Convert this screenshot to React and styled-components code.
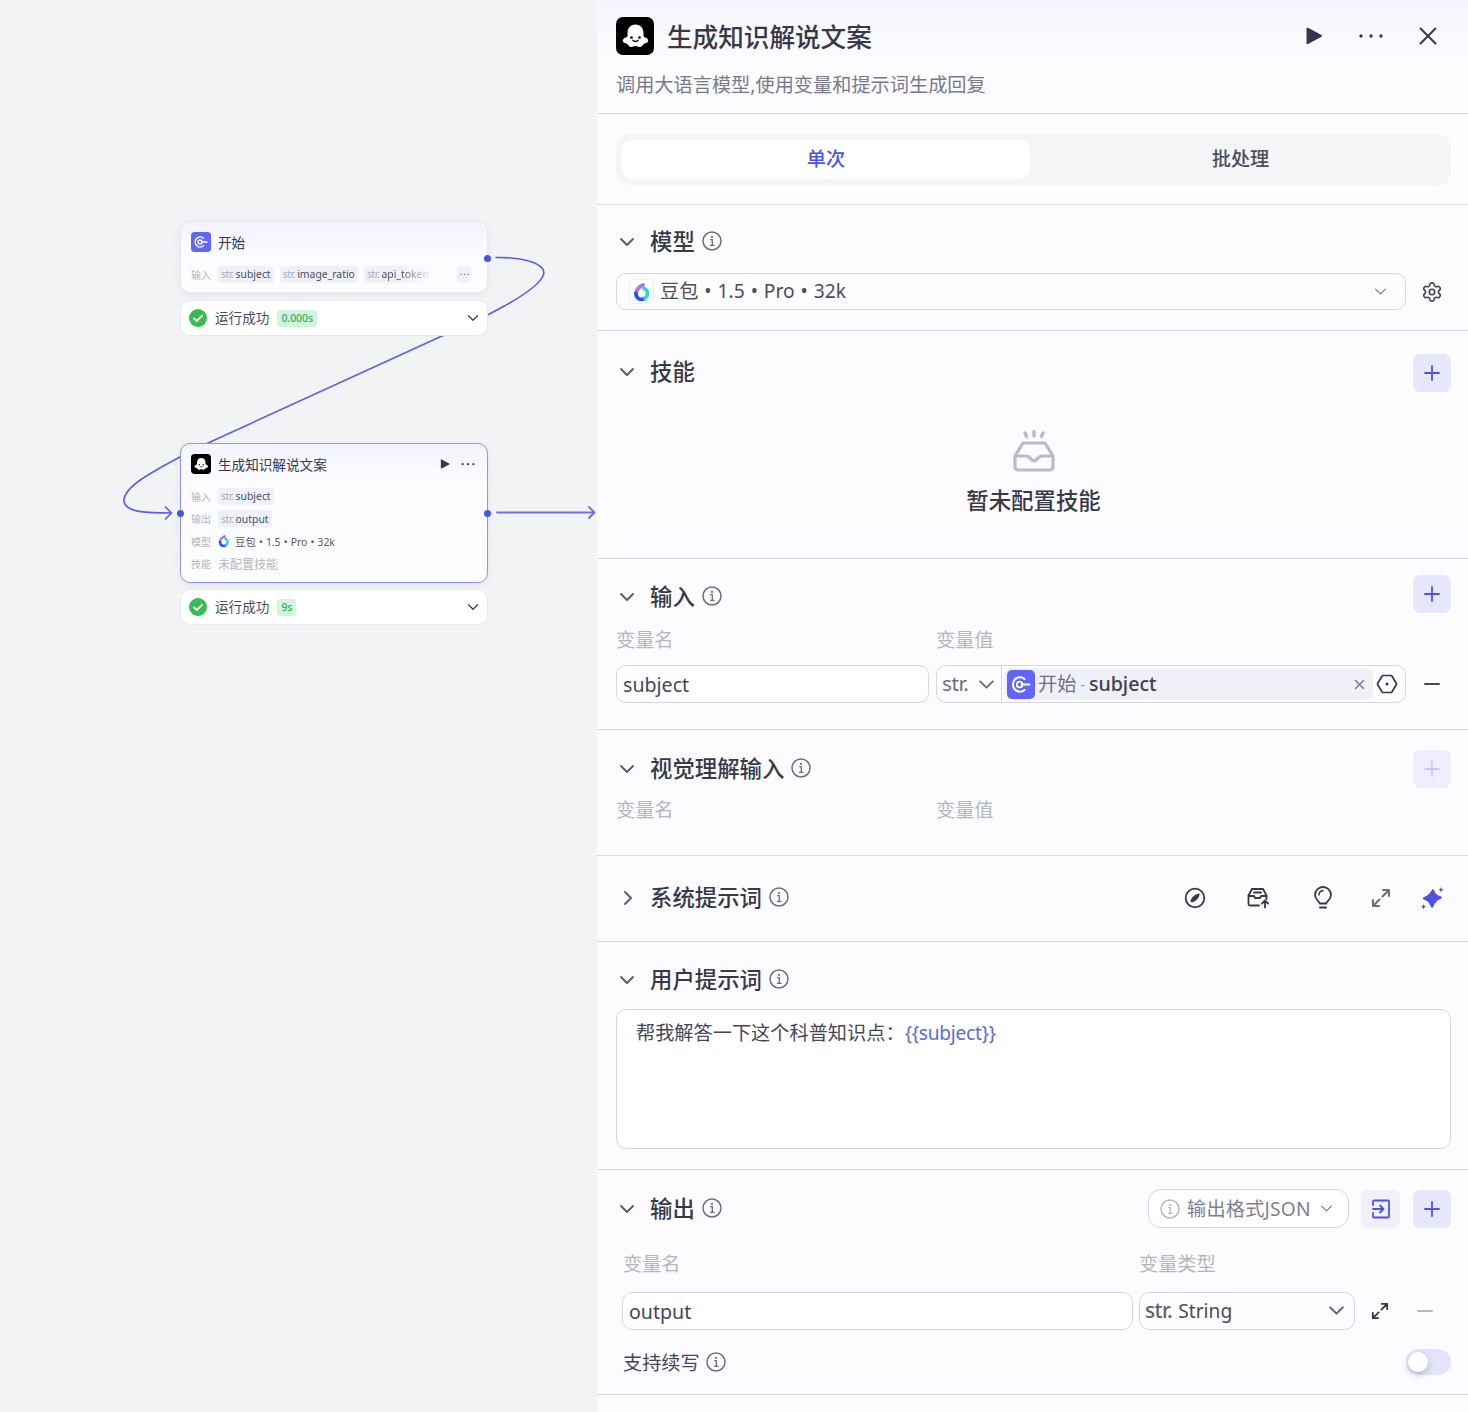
import React from 'react';
import styled, { createGlobalStyle } from 'styled-components';
import { Settings } from 'lucide-react';

const FONT = '"Noto Sans", "Noto Sans CJK SC", sans-serif';
const INK = '#373949';
const BLUE = '#4d53e8';

const Global = createGlobalStyle`
  html, body { margin: 0; padding: 0; }
  body { font-family: ${FONT}; color: ${INK}; background: #f2f3f5; }
  * { box-sizing: border-box; }
`;

const Page = styled.div`
  display: flex;
  width: 1468px;
  height: 1412px;
  overflow: hidden;
`;

/* ---------- canvas ---------- */
const Canvas = styled.div`
  position: relative;
  width: 597px;
  flex: none;
  background-color: #f2f3f5;
  background-image: radial-gradient(#e7e8ec 1px, transparent 1.2px);
  background-size: 32px 32px;
`;
const Edges = styled.svg`
  position: absolute;
  inset: 0;
`;
const NodeWrap = styled.div`
  position: absolute;
  left: 180px;
  top: ${p => p.$top}px;
  width: 308px;
  display: flex;
  flex-direction: column;
  gap: ${p => p.$gap}px;
`;
const NodeCard = styled.div`
  position: relative;
  height: ${p => p.$h}px;
  border-radius: 10px;
  border: 1px solid ${p => (p.$selected ? '#8f93f5' : '#e8e8f2')};
  background: linear-gradient(180deg, #f3f3ff 0, #fcfcff 40px, #fdfdff 100%);
  box-shadow: 0 2px 6px rgba(40, 45, 80, 0.08);
  padding: 10px 9px 0 10px;
`;
const NodeHead = styled.div`
  display: flex;
  align-items: center;
  gap: 7px;
  height: 20px;
  font-size: 13.6px;
  color: ${INK};
`;
const NodeTitle = styled.span`
  flex: 1;
  white-space: nowrap;
`;
const NodeActions = styled.div`
  display: flex;
  align-items: center;
  gap: 11px;
  padding-right: 3px;
`;
const NodeRows = styled.div`
  display: flex;
  flex-direction: column;
  margin-top: ${p => p.$mt}px;
  gap: 4.67px;
`;
const NodeRow = styled.div`
  display: flex;
  align-items: center;
  gap: 7px;
  height: 18px;
  font-size: 10.4px;
  white-space: nowrap;
`;
const NodeLabel = styled.span`
  width: 20px;
  flex: none;
  color: #b3b5c0;
  font-size: 10px;
`;
const Tag = styled.span`
  display: inline-flex;
  align-items: center;
  height: 17px;
  padding: 0 3px;
  border-radius: 3px;
  background: #f0f1f8;
  color: #4b4d5e;
  font-size: 10.4px;
  margin-right: ${p => p.$mr || 0}px;
  ${p => p.$fade && `
    -webkit-mask-image: linear-gradient(90deg, #000 55%, transparent 100%);
    mask-image: linear-gradient(90deg, #000 55%, transparent 100%);
  `}
`;
const TagType = styled.span`
  color: #a9acbb;
  margin-right: 2px;
  letter-spacing: -0.4px;
`;
const MoreChip = styled.span`
  position: absolute;
  left: 276px;
  top: 44px;
  width: 14px;
  height: 17px;
  border-radius: 3px;
  background: #f0f1f8;
  display: flex;
  align-items: center;
  justify-content: center;
`;
const NodeValue = styled.span`
  display: flex;
  align-items: center;
  gap: 5px;
  color: #555766;
  font-size: 10.4px;
  word-spacing: 0.4px;
`;
const NodeMuted = styled.span`
  color: #b3b5c0;
  font-size: 12px;
`;
const Handle = styled.span`
  position: absolute;
  width: 7px;
  height: 7px;
  border-radius: 50%;
  background: ${BLUE};
  top: ${p => p.$top}px;
  ${p => (p.$left ? 'left: -4px;' : 'right: -4px;')}
`;
const StatusBar = styled.div`
  display: flex;
  align-items: center;
  height: 36px;
  padding: 0 8px 0 8px;
  background: #fff;
  border: 1px solid #e8e8f0;
  border-radius: 10px;
  font-size: 13.6px;
  color: #4a4c5b;
`;
const StatusText = styled.span`
  margin-left: 8px;
  padding-bottom: 3px;
`;
const StatusTag = styled.span`
  margin-left: 8px;
  height: 17px;
  padding: 0 4px;
  border-radius: 3px;
  background: #d2f3de;
  color: #22b655;
  font-size: 10.4px;
  font-weight: 500;
  display: flex;
  align-items: center;
`;
const Spacer = styled.span`
  flex: 1;
`;

/* ---------- panel ---------- */
const Panel = styled.div`
  flex: 1;
  min-width: 0;
  background: #fcfcff;
  display: flex;
  flex-direction: column;
`;
const Section = styled.section`
  height: ${p => p.$h}px;
  flex: none;
  padding: ${p => p.$pt}px 17px 0 19px;
  border-bottom: 1px solid #d9d9e6;
`;
const Header = styled(Section)`
  background: linear-gradient(180deg, #f4f4fe 0, #fcfcff 60px);
`;
const HeaderTop = styled.div`
  display: flex;
  align-items: center;
  height: 38px;
`;
const Title = styled.h1`
  margin: 4px 0 0 13px;
  font-size: 25.6px;
  font-weight: 500;
  color: ${INK};
  flex: 1;
  line-height: 38px;
  white-space: nowrap;
`;
const HeaderActions = styled.div`
  display: flex;
  align-items: center;
  gap: 35px;
  padding-right: 14px;
`;
const Subtitle = styled.p`
  margin: 17px 0 0;
  font-size: 19.2px;
  line-height: 26px;
  color: #787a8b;
  white-space: nowrap;
`;
const Tabs = styled.div`
  display: flex;
  height: 51px;
  padding: 6px 0 6px 6px;
  border-radius: 13px;
  background: #f5f5f7;
`;
const TabItem = styled.div`
  flex: ${p => (p.$active ? '0 0 408px' : '1')};
  display: flex;
  align-items: center;
  justify-content: center;
  border-radius: 10px;
  padding-bottom: 3px;
  font-size: 19.2px;
  font-weight: 500;
  background: ${p => (p.$active ? '#fff' : 'transparent')};
  color: ${p => (p.$active ? BLUE : '#4c4e5d')};
`;
const SectionHead = styled.div`
  display: flex;
  align-items: center;
  height: ${p => p.$h || 38}px;
`;
const Chevron = styled.span`
  width: 22px;
  display: flex;
  justify-content: center;
  margin-right: 12px;
  flex: none;
`;
const SectionTitle = styled.h2`
  margin: 0 7px 0 0;
  font-size: 22.4px;
  line-height: 30px;
  font-weight: 500;
  color: ${INK};
  white-space: nowrap;
`;
const HeadIcon = styled.span`
  display: flex;
  padding-bottom: 2px;
`;
const PlusButton = styled.button`
  width: ${p => p.$w || 38}px;
  height: 38px;
  border: 0;
  padding: 0;
  border-radius: 7px;
  background: ${p => (p.$soft ? '#f0f1f8' : '#e6e7fd')};
  display: flex;
  align-items: center;
  justify-content: center;
  opacity: ${p => (p.$disabled ? 0.62 : 1)};
  flex: none;
`;
const Select = styled.div`
  display: flex;
  align-items: center;
  flex: 1;
  height: 37px;
  padding: 0 18px 0 12px;
  border: 1px solid #d5d5e5;
  border-radius: 10px;
  font-size: 19.2px;
  color: #4a4c5b;
  background: #fdfdff;
`;
const ModelName = styled.span`
  padding-bottom: 3px;
  word-spacing: 1px;
  white-space: nowrap;
`;
const ModelTile = styled.span`
  width: 25px;
  height: 25px;
  display: flex;
  align-items: center;
  justify-content: center;
  background: #fff;
  border: 1px solid #eceef4;
  border-radius: 5px;
  margin-right: 6px;
  flex: none;
`;
const Row = styled.div`
  display: flex;
  align-items: center;
  margin-top: ${p => p.$mt || 0}px;
  padding-left: ${p => p.$pl || 0}px;
`;
const Gear = styled.span`
  width: 45px;
  display: flex;
  justify-content: flex-end;
  padding-right: 8px;
  flex: none;
  color: #454757;
`;
const Empty = styled.div`
  display: flex;
  flex-direction: column;
  align-items: center;
  margin-top: 39px;
`;
const EmptyText = styled.div`
  margin-top: 12px;
  font-size: 22.4px;
  line-height: 34px;
  font-weight: 500;
  color: ${INK};
`;
const Labels = styled.div`
  display: grid;
  grid-template-columns: ${p => p.$cols};
  margin-top: ${p => p.$mt}px;
  padding-left: ${p => p.$pl || 0}px;
  font-size: 19.2px;
  line-height: 26px;
  color: #b4b5bd;
`;
const Field = styled.div`
  width: ${p => p.$w}px;
  height: 38px;
  flex: none;
  display: flex;
  align-items: center;
  padding: 0 6px 0 6px;
  border: 1px solid #d5d5e5;
  border-radius: 10px;
  background: #fff;
  font-size: 19.6px;
  color: #454757;
`;
const ValueBox = styled.div`
  width: 470px;
  height: 38px;
  flex: none;
  margin-left: 7px;
  display: flex;
  align-items: center;
  border: 1px solid #d5d5e5;
  border-radius: 10px;
  background: #fdfdff;
`;
const TypePick = styled.div`
  width: 65px;
  height: 100%;
  flex: none;
  display: flex;
  align-items: center;
  gap: 10px;
  padding: 0 0 0 5px;
  border-right: 1px solid #d5d5e5;
  font-size: 20.8px;
  letter-spacing: -0.5px;
  color: #6d6f7d;
`;
const TypeLabel = styled.span`
  padding-bottom: 3px;
`;
const RefChip = styled.div`
  width: 369px;
  height: 32px;
  margin: 0 3px 0 2px;
  flex: none;
  display: flex;
  align-items: center;
  padding: 0 8px 0 3px;
  border-radius: 8px;
  background: #eff0f8;
`;
const RefNode = styled.span`
  margin-left: 3px;
  padding-bottom: 2px;
  font-size: 19.2px;
  color: #6f7180;
`;
const RefDash = styled.span`
  margin: 0 4px;
  font-size: 14px;
  color: #8e909d;
`;
const RefName = styled.span`
  padding-bottom: 2px;
  font-size: 19.6px;
  font-weight: 500;
  color: #3f4151;
`;
const Minus = styled.span`
  width: 45px;
  display: flex;
  justify-content: flex-end;
  padding-right: 11px;
  flex: none;
`;
const Tools = styled.div`
  margin-left: auto;
  margin-right: -7px;
  display: flex;
  align-items: center;
`;
const Tool = styled.span`
  width: ${p => p.$w}px;
  display: flex;
  justify-content: center;
  flex: none;
`;
const PromptBox = styled.div`
  margin-top: 10px;
  height: 140px;
  padding: 9px 19px;
  border: 1px solid #d5d5e5;
  border-radius: 10px;
  background: #fff;
  font-size: 19.2px;
  line-height: 28px;
  color: #454757;
`;
const Var = styled.span`
  color: #5d6ad9;
  letter-spacing: -0.25px;
`;
const HeadRight = styled.div`
  margin-left: auto;
  margin-top: ${p => p.$shift || 0}px;
  display: flex;
  align-items: center;
  gap: ${p => p.$gap || 12}px;
`;
const FormatPick = styled.div`
  width: 201px;
  height: 39px;
  display: flex;
  align-items: center;
  padding: 0 15px 0 11px;
  border: 1px solid #d5d5e5;
  border-radius: 13px;
  background: #fff;
  font-size: 19.2px;
  color: #7e808e;
  white-space: nowrap;
`;
const FormatText = styled.span`
  margin: 0 auto 0 7px;
  padding-bottom: 2px;
  letter-spacing: 0.2px;
`;
const TypeSelect = styled.div`
  width: 216px;
  height: 38px;
  flex: none;
  margin-left: 6px;
  display: flex;
  align-items: center;
  justify-content: space-between;
  padding: 0 9px 2px 5px;
  border: 1px solid #d5d5e5;
  border-radius: 10px;
  background: #fdfdff;
  font-size: 19.2px;
  color: #4a4c5b;
`;
const TypeDim = styled.span`
  color: #5f6170;
  font-size: 20.8px;
  letter-spacing: -0.5px;
  font-weight: 500;
  margin-right: 6px;
`;
const ContinueRow = styled.div`
  display: flex;
  align-items: center;
  margin-top: 19px;
  padding-left: 7px;
  height: 26px;
  font-size: 19.2px;
  color: #454757;
  gap: 6px;
`;
const Toggle = styled.div`
  margin-left: auto;
  width: 45px;
  height: 26px;
  border-radius: 13px;
  background: #e3e4fb;
  position: relative;
`;
const Knob = styled.span`
  position: absolute;
  left: 2px;
  top: 3px;
  width: 20px;
  height: 20px;
  border-radius: 50%;
  background: #fff;
  box-shadow: 0 3px 7px rgba(30, 30, 60, 0.22);
`;

/* ---------- icons ---------- */
const Info = ({ size = 20, color = '#6c6e7e' }) => (
  <svg width={size} height={size} viewBox="0 0 20 20" fill="none" style={{ flex: 'none' }}>
    <circle cx="10" cy="10" r="9" stroke={color} strokeWidth="1.5" />
    <circle cx="10" cy="5.9" r="1.1" fill={color} />
    <path d="M8.2 8.6H10.3V14.2M8 14.4H12.6" stroke={color} strokeWidth="1.3" />
  </svg>
);
const Down = ({ size = 16, color = '#5d5f6e', w = 2 }) => (
  <svg width={size} height={size} viewBox="0 0 16 16" fill="none" style={{ flex: 'none' }}>
    <path d="M2 5l6 6 6-6" stroke={color} strokeWidth={w} strokeLinecap="round" strokeLinejoin="round" />
  </svg>
);
const Right = () => (
  <svg width="16" height="16" viewBox="0 0 16 16" fill="none" style={{ marginLeft: 2 }}>
    <path d="M5 2l6 6-6 6" stroke="#5d5f6e" strokeWidth="2" strokeLinecap="round" strokeLinejoin="round" />
  </svg>
);
const Plus = ({ color = BLUE }) => (
  <svg width="16" height="16" viewBox="0 0 16 16" fill="none">
    <path d="M8 1v14M1 8h14" stroke={color} strokeWidth="1.8" strokeLinecap="round" />
  </svg>
);
const Dash = ({ color = '#454757', width = 16 }) => (
  <svg width={width} height="4" viewBox={`0 0 ${width} 4`}>
    <path d={`M1 2H${width - 1}`} stroke={color} strokeWidth="2" strokeLinecap="round" />
  </svg>
);
const Play = ({ size = 18 }) => (
  <svg width={size} height={size} viewBox="0 0 18 18" style={{ flex: 'none' }}>
    <path d="M1.500 1.600c0-.8.8-1.200 1.500-.8l13.500 7.300c.6.400.6 1.300 0 1.700l-13.500 7.300c-.7.400-1.500 0-1.500-.8z" fill="#33384f" />
  </svg>
);
const Dots = ({ size = 26, color = '#373949', r = 1.7 }) => (
  <svg width={size} height={size / 3.25} viewBox="0 0 26 8">
    <circle cx="3" cy="4" r={r} fill={color} />
    <circle cx="13" cy="4" r={r} fill={color} />
    <circle cx="23" cy="4" r={r} fill={color} />
  </svg>
);
const Ghost = ({ size = 38 }) => (
  <svg width={size} height={size} viewBox="0 0 38 38" style={{ flex: 'none' }}>
    <rect width="38" height="38" rx="7" fill="#000" />
    <path
      d="M19.500 7.500C24.500 7.500 27.500 11.500 27.500 16V18.500C27.500 19.800 28.500 20.300 30 20.800C32.800 21.800 33 25.300 30.300 26C28.800 26.400 28 26.500 27.200 27.500C25.800 30 23.300 30.600 21.700 29.600C20.400 28.800 18.600 28.800 17.300 29.600C15.700 30.600 13.200 30 11.800 27.500C11 26.500 10.200 26.400 8.700 26C6 25.300 6.200 21.800 9 20.800C10.500 20.300 11.500 19.800 11.500 18.500V16C11.500 11.500 14.500 7.500 19.500 7.500Z"
      fill="#fff"
    />
    <circle cx="15.500" cy="20.500" r="1.300" fill="#000" />
    <circle cx="23.500" cy="20.500" r="1.300" fill="#000" />
    <path d="M16.800 23.200c1.400 1.700 4 1.700 5.400 0" stroke="#000" strokeWidth="1.300" fill="none" strokeLinecap="round" />
  </svg>
);
const StartIcon = ({ w = 20, h = 20 }) => (
  <svg width={w} height={h} viewBox="0 0 20 20" style={{ flex: 'none' }} preserveAspectRatio="none">
    <rect width="20" height="20" rx="3.500" fill="#6166f6" />
    <path d="M12.500 6.200A5 5 0 1 0 12.500 13.800" stroke="#fff" strokeWidth="1.500" fill="none" strokeLinecap="round" />
    <circle cx="9" cy="10" r="2" stroke="#fff" strokeWidth="1.300" fill="none" />
    <path d="M10.500 10H16" stroke="#fff" strokeWidth="1.500" strokeLinecap="round" />
  </svg>
);
const Doubao = ({ size = 18 }) => (
  <svg width={size} height={size} viewBox="0 0 18 18" fill="none" style={{ flex: 'none' }}>
    <path d="M10 2C6 3.500 3.500 6.500 3 10.500" stroke="#a877ee" strokeWidth="3.800" strokeLinecap="round" />
    <path d="M3 10.500C3 15 7 17.500 11 15.800" stroke="#2a52ea" strokeWidth="3.800" strokeLinecap="round" />
    <path d="M11 5.500C14.800 7 16 12 12 15.500" stroke="#35d6c6" strokeWidth="3.600" strokeLinecap="round" />
  </svg>
);
const Check = () => (
  <svg width="18" height="18" viewBox="0 0 18 18" style={{ flex: 'none' }}>
    <circle cx="9" cy="9" r="9" fill="#38bb51" />
    <path d="M5 9.300l2.800 2.700L13 6.800" stroke="#fff" strokeWidth="1.800" fill="none" strokeLinecap="round" strokeLinejoin="round" />
  </svg>
);
const Close = () => (
  <svg width="18" height="18" viewBox="0 0 18 18">
    <path d="M1.500 1.500l15 15M16.500 1.500l-15 15" stroke="#373949" strokeWidth="2" strokeLinecap="round" />
  </svg>
);
const EmptyBox = () => (
  <svg width="44" height="42" viewBox="0 0 44 42" fill="none">
    <path d="M22 1.500v4.500M13 3l1.500 3.500M31 3l-1.500 3.500" stroke="#b8bbc9" strokeWidth="3.400" strokeLinecap="round" />
    <path d="M11 13h22l8 13v11a3 3 0 0 1-3 3H6a3 3 0 0 1-3-3V26z" stroke="#b8bbc9" strokeWidth="3.200" strokeLinejoin="round" />
    <path d="M3 26h11c2 0 3 1 4 2l2 2c1 1 3 1 4 0l2-2c1-1 2-2 4-2h11" stroke="#b8bbc9" strokeWidth="3.200" strokeLinejoin="round" />
  </svg>
);
const HexIcon = () => (
  <svg width="22" height="22" viewBox="0 0 22 22" fill="none" style={{ flex: 'none' }}>
    <path d="M7 2.500h8a1 1 0 0 1 .9.500l4.500 7.500a1 1 0 0 1 0 1L15.900 19a1 1 0 0 1-.9.500H7a1 1 0 0 1-.9-.5L1.600 11.500a1 1 0 0 1 0-1L6.100 3a1 1 0 0 1 .9-.5z" stroke="#373949" strokeWidth="1.700" />
    <circle cx="11" cy="11" r="1.500" fill="#373949" />
  </svg>
);
const SmallX = () => (
  <svg width="11" height="11" viewBox="0 0 11 11" style={{ flex: 'none' }}>
    <path d="M1.500 1.500l8 8M9.500 1.500l-8 8" stroke="#787a88" strokeWidth="1.500" strokeLinecap="round" />
  </svg>
);
const Compass = () => (
  <svg width="22" height="22" viewBox="0 0 22 22" fill="none">
    <circle cx="11" cy="11" r="9.300" stroke="#373949" strokeWidth="1.800" />
    <path d="M15.500 6.500c.2 3.500-2.800 7.500-7.500 9 -1-.6-1.300-1-1.500-1.500 1-3.800 4.500-7 9-7.500z" fill="#373949" />
  </svg>
);
const InboxUp = () => (
  <svg width="24" height="22" viewBox="0 0 24 22" fill="none" stroke="#373949" strokeWidth="1.800" strokeLinejoin="round" strokeLinecap="round">
    <path d="M5 2h11l3.500 6.500V12M1.500 8.500V17a1.500 1.500 0 0 0 1.500 1.500h9M1.500 8.500L5 2" />
    <path d="M1.500 9h5.500l1 2h5l1-2h5.500" />
    <path d="M7 5.500h7" />
    <path d="M18 20.500V14M15 16.500l3-3 3 3" />
  </svg>
);
const Bulb = () => (
  <svg width="20" height="24" viewBox="0 0 20 24" fill="none" stroke="#373949" strokeWidth="1.800" strokeLinecap="round">
    <path d="M6.800 17.500c0-2-4.800-3.700-4.800-8.500a8 8 0 0 1 16 0c0 4.800-4.800 6.500-4.800 8.500z" strokeLinejoin="round" />
    <path d="M6 9c0-2.500 1.600-4 4-4.400" strokeWidth="1.500" />
    <path d="M7 21.500h6" strokeWidth="2" />
  </svg>
);
const Expand = ({ color = '#373949', size = 20 }) => (
  <svg width={size} height={size} viewBox="0 0 20 20" fill="none" stroke={color} strokeWidth="2" strokeLinecap="round" strokeLinejoin="round">
    <path d="M12 2h6v6M18 2l-6.500 6.500M8 18H2v-6M2 18l6.500-6.500" />
  </svg>
);
const Sparkle = () => (
  <svg width="24" height="24" viewBox="0 0 24 24" fill={BLUE}>
    <path d="M13 4.500C14 8.500 16 10.500 20.500 11.500C16 13 14 15 12 20.500C10.500 15.500 8.500 13.500 4 12.300C8.500 10.500 11 8.500 13 4.500Z" stroke={BLUE} strokeWidth="2.400" strokeLinejoin="round" />
    <path d="M21 1l.8 1.900 1.900.8-1.900.8-.8 2-.8-2-1.900-.8 1.900-.8z" />
    <path d="M3.500 18l.8 1.900 1.900.8-1.900.8-.8 2-.8-2-1.900-.8 1.900-.8z" />
  </svg>
);
const ImportIcon = () => (
  <svg width="20" height="20" viewBox="0 0 20 20" fill="none" stroke={BLUE} strokeWidth="1.800" strokeLinecap="round" strokeLinejoin="round">
    <path d="M2 6V2.500a1 1 0 0 1 1-1h14a1 1 0 0 1 1 1v15a1 1 0 0 1-1 1H3a1 1 0 0 1-1-1V14" />
    <path d="M2 10h10M9 6.500l3.500 3.500L9 13.500" />
  </svg>
);

const HeadInfo = ({ title, chevron = 'down' }) => (
  <>
    <Chevron>{chevron === 'down' ? <Down /> : <Right />}</Chevron>
    <SectionTitle>{title}</SectionTitle>
    <HeadIcon><Info /></HeadIcon>
  </>
);

const NodeChevron = () => <Down size={12} color="#373949" w={1.600} />;

export default function App() {
  return (
    <Page>
      <Global />
      <Canvas>
        <Edges width="597" height="1412" viewBox="0 0 597 1412" fill="none">
          <path
            d="M496 257.500C530 257 548 266 543 276C535 293 480 320 443 335.500L207 443.500L180 457C150 473 122 488 124 502C127 513 150 513 171 513M165.500 507L171.500 513L165.500 519"
            stroke="#5a5fe8"
            strokeWidth="1.600"
            strokeLinecap="round"
            strokeLinejoin="round"
          />
          <path d="M497 512.500H594M589 507l5.500 5.500L589 518" stroke="#6a70ea" strokeWidth="1.800" strokeLinecap="round" strokeLinejoin="round" />
        </Edges>
        <NodeWrap $top={221} $gap={7}>
          <NodeCard $h={72}>
            <NodeHead>
              <StartIcon />
              <NodeTitle>开始</NodeTitle>
            </NodeHead>
            <NodeRows $mt={13}>
              <NodeRow>
                <NodeLabel>输入</NodeLabel>
                <Tag $mr={-1}><TagType>str.</TagType>subject</Tag>
                <Tag $mr={-1}><TagType>str.</TagType>image_ratio</Tag>
                <Tag $fade><TagType>str.</TagType>api_token</Tag>
              </NodeRow>
            </NodeRows>
            <MoreChip><Dots size={9} color="#6d6f7d" r={2} /></MoreChip>
            <Handle $top={33} />
          </NodeCard>
          <StatusBar>
            <Check />
            <StatusText>运行成功</StatusText>
            <StatusTag>0.000s</StatusTag>
            <Spacer />
            <NodeChevron />
          </StatusBar>
        </NodeWrap>
        <NodeWrap $top={443} $gap={6}>
          <NodeCard $h={140} $selected>
            <NodeHead>
              <Ghost size={20} />
              <NodeTitle>生成知识解说文案</NodeTitle>
              <NodeActions>
                <Play size={10} />
                <Dots size={14} r={2} />
              </NodeActions>
            </NodeHead>
            <NodeRows $mt={13}>
              <NodeRow>
                <NodeLabel>输入</NodeLabel>
                <Tag><TagType>str.</TagType>subject</Tag>
              </NodeRow>
              <NodeRow>
                <NodeLabel>输出</NodeLabel>
                <Tag><TagType>str.</TagType>output</Tag>
              </NodeRow>
              <NodeRow>
                <NodeLabel>模型</NodeLabel>
                <NodeValue><Doubao size={12} />豆包 • 1.5 • Pro • 32k</NodeValue>
              </NodeRow>
              <NodeRow>
                <NodeLabel>技能</NodeLabel>
                <NodeMuted>未配置技能</NodeMuted>
              </NodeRow>
            </NodeRows>
            <Handle $left $top={66} />
            <Handle $top={66} />
          </NodeCard>
          <StatusBar>
            <Check />
            <StatusText>运行成功</StatusText>
            <StatusTag>9s</StatusTag>
            <Spacer />
            <NodeChevron />
          </StatusBar>
        </NodeWrap>
      </Canvas>

      <Panel>
        <Header $h={114} $pt={17}>
          <HeaderTop>
            <Ghost />
            <Title>生成知识解说文案</Title>
            <HeaderActions>
              <Play />
              <Dots />
              <Close />
            </HeaderActions>
          </HeaderTop>
          <Subtitle>调用大语言模型,使用变量和提示词生成回复</Subtitle>
        </Header>

        <Section $h={91} $pt={20}>
          <Tabs>
            <TabItem $active>单次</TabItem>
            <TabItem>批处理</TabItem>
          </Tabs>
        </Section>

        <Section $h={126} $pt={18}>
          <SectionHead>
            <HeadInfo title="模型" />
          </SectionHead>
          <Row $mt={12}>
            <Select>
              <ModelTile><Doubao /></ModelTile>
              <ModelName>豆包 • 1.5 • Pro • 32k</ModelName>
              <Spacer />
              <Down size={13} color="#73757f" w={1.300} />
            </Select>
            <Gear><Settings size={22} strokeWidth={1.800} /></Gear>
          </Row>
        </Section>

        <Section $h={228} $pt={22}>
          <SectionHead>
            <Chevron><Down /></Chevron>
            <SectionTitle>技能</SectionTitle>
            <HeadRight $shift={2}><PlusButton><Plus /></PlusButton></HeadRight>
          </SectionHead>
          <Empty>
            <EmptyBox />
            <EmptyText>暂未配置技能</EmptyText>
          </Empty>
        </Section>

        <Section $h={171} $pt={19}>
          <SectionHead>
            <HeadInfo title="输入" />
            <HeadRight $shift={-6}><PlusButton><Plus /></PlusButton></HeadRight>
          </SectionHead>
          <Labels $mt={11} $cols="320px 1fr">
            <span>变量名</span>
            <span>变量值</span>
          </Labels>
          <Row $mt={12}>
            <Field $w={313}>subject</Field>
            <ValueBox>
              <TypePick><TypeLabel>str.</TypeLabel><Down size={17} color="#6d6f7d" w={1.800} /></TypePick>
              <RefChip>
                <StartIcon w={28} h={29} />
                <RefNode>开始</RefNode>
                <RefDash>-</RefDash>
                <RefName>subject</RefName>
                <Spacer />
                <SmallX />
              </RefChip>
              <HexIcon />
            </ValueBox>
            <Minus><Dash /></Minus>
          </Row>
        </Section>

        <Section $h={126} $pt={20}>
          <SectionHead>
            <HeadInfo title="视觉理解输入" />
            <HeadRight><PlusButton $disabled><Plus color="#a9aef8" /></PlusButton></HeadRight>
          </SectionHead>
          <Labels $mt={9} $cols="320px 1fr">
            <span>变量名</span>
            <span>变量值</span>
          </Labels>
        </Section>

        <Section $h={86} $pt={23}>
          <SectionHead>
            <HeadInfo title="系统提示词" chevron="right" />
            <Tools>
              <Tool $w={64}><Compass /></Tool>
              <Tool $w={64}><InboxUp /></Tool>
              <Tool $w={64}><Bulb /></Tool>
              <Tool $w={51}><Expand color="#6d6e76" /></Tool>
              <Tool $w={52}><Sparkle /></Tool>
            </Tools>
          </SectionHead>
        </Section>

        <Section $h={228} $pt={19}>
          <SectionHead>
            <HeadInfo title="用户提示词" />
          </SectionHead>
          <PromptBox>
            帮我解答一下这个科普知识点：<Var>{'{{subject}}'}</Var>
          </PromptBox>
        </Section>

        <Section $h={225} $pt={19}>
          <SectionHead $h={39}>
            <HeadInfo title="输出" />
            <HeadRight $gap={12}>
              <FormatPick>
                <Info size={20} color="#b6b8c6" />
                <FormatText>输出格式JSON</FormatText>
                <Down size={13} color="#73757f" w={1.400} />
              </FormatPick>
              <PlusButton $soft $w={39}><ImportIcon /></PlusButton>
              <PlusButton style={{ marginLeft: 1 }}><Plus /></PlusButton>
            </HeadRight>
          </SectionHead>
          <Labels $mt={23} $pl={7} $cols="516px 1fr">
            <span>变量名</span>
            <span>变量类型</span>
          </Labels>
          <Row $mt={15} $pl={6}>
            <Field $w={511}>output</Field>
            <TypeSelect>
              <span><TypeDim>str.</TypeDim>String</span>
              <Down size={17} color="#5d5f6e" w={1.800} />
            </TypeSelect>
            <Tool $w={50}><Expand size={18} /></Tool>
            <Tool $w={40}><Dash color="#b6b8c6" /></Tool>
          </Row>
          <ContinueRow>
            支持续写
            <Info />
            <Toggle><Knob /></Toggle>
          </ContinueRow>
        </Section>
      </Panel>
    </Page>
  );
}
